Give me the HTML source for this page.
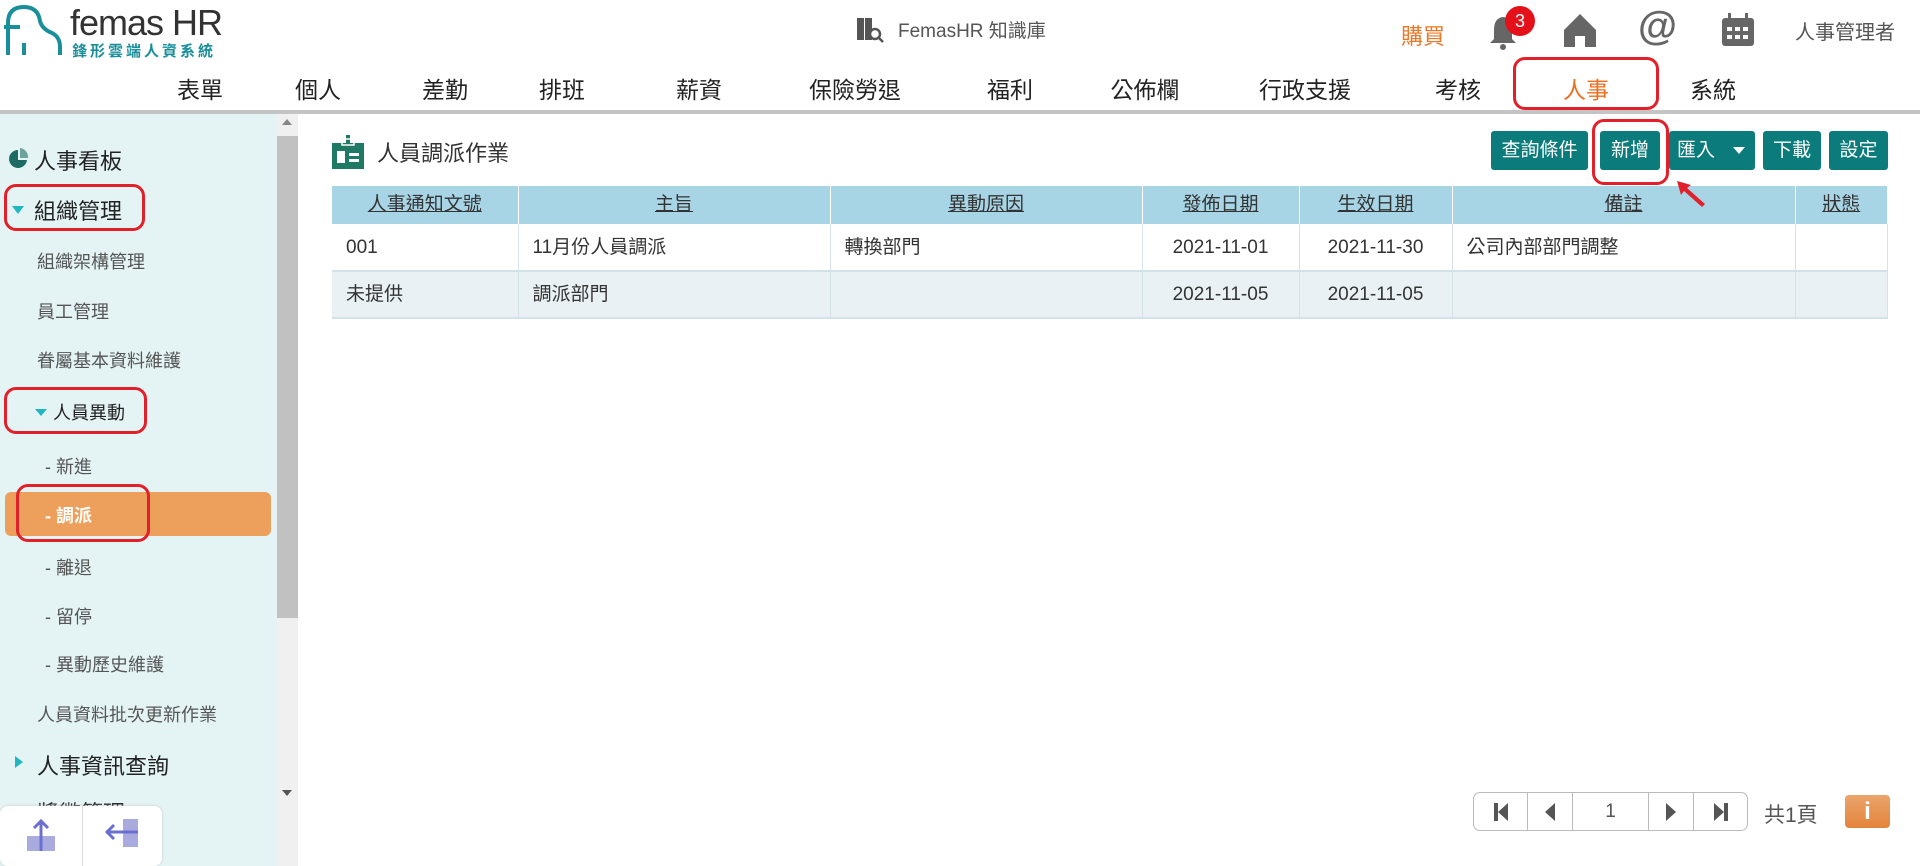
<!DOCTYPE html>
<html><head><meta charset="utf-8"><style>
*{margin:0;padding:0;box-sizing:border-box}
body{width:1920px;height:866px;overflow:hidden;background:#fff;font-family:"Liberation Sans","Noto Sans CJK TC",sans-serif;position:relative;color:#333}
.a{position:absolute;white-space:nowrap}
.nav{position:absolute;top:71px;font-size:23px;color:#222;transform:translateX(-50%)}
.side{position:absolute;left:0;top:114px;width:298px;height:752px;background:#e4f4f5}
.si{position:absolute;font-size:18px;color:#555;white-space:nowrap}
.rb{position:absolute;border:3px solid #e2202a;border-radius:12px;z-index:5}
.btn{position:absolute;top:131px;height:39px;background:#0b7c7b;color:#fff;font-size:19px;line-height:39px;text-align:center;border-radius:3px}
table{position:absolute;left:332px;top:186px;width:1556px;border-collapse:collapse;font-size:19px}
th{background:#a8d5e5;height:38px;line-height:38px;font-weight:normal;text-decoration:underline;color:#333;border-right:1px solid #fff;vertical-align:middle}
td{height:47px;line-height:45px;vertical-align:middle;border-right:1px solid #d5e3e8;border-bottom:2px solid #d3e2e8;padding:0 14px;color:#333}
tr.r2 td{background:#e9f1f4}
.pg{position:absolute;top:792px;height:39px;border:1px solid #bbb;border-radius:7px;left:1473px;width:275px;display:flex}
.pg div{border-right:1px solid #bbb;display:flex;align-items:center;justify-content:center}
.pg div:last-child{border-right:none}
</style></head><body>
<svg class="a" style="left:2px;top:3px" width="62" height="56" viewBox="0 0 62 56"><path d="M6 52 V20 Q6 4 22 4 Q36 4 38 18 Q40 26 50 30 Q58 34 58 44 V52" fill="none" stroke="#1a8f9c" stroke-width="4"/><path d="M2 24 H18" stroke="#1a8f9c" stroke-width="4"/><path d="M22 40 V52" stroke="#1a8f9c" stroke-width="4"/></svg>
<div class="a" style="left:70px;top:2px;font-size:36px;color:#333;letter-spacing:-1px">femas HR</div>
<div class="a" style="left:72px;top:40px;font-size:15px;color:#1a8f9c;font-weight:bold;letter-spacing:3px">鋒形雲端人資系統</div>
<svg class="a" style="left:855px;top:14px" width="30" height="30" viewBox="0 0 30 30"><rect x="2" y="4" width="7" height="22" fill="#555"/><rect x="10" y="4" width="7" height="22" fill="#555"/><circle cx="20" cy="20" r="5" fill="#fff" stroke="#555" stroke-width="2.5"/><path d="M24 24 L28 28" stroke="#555" stroke-width="2.5"/></svg>
<div class="a" style="left:898px;top:16px;font-size:19px;color:#555">FemasHR 知識庫</div>
<div class="a" style="left:1401px;top:19px;font-size:22px;color:#e8792a">購買</div>
<svg class="a" style="left:1488px;top:14px" width="30" height="36" viewBox="0 0 30 36"><path d="M15 3 Q6 4 6 16 V25 L2 29 H28 L24 25 V16 Q24 4 15 3Z" fill="#666"/><circle cx="15" cy="33" r="3" fill="#666"/></svg>
<div class="a" style="left:1505px;top:6px;width:30px;height:30px;border-radius:50%;background:#e4101a;color:#fff;font-size:18px;text-align:center;line-height:30px">3</div>
<svg class="a" style="left:1562px;top:12px" width="36" height="36" viewBox="0 0 36 36"><path d="M18 2 L34 18 V35 H23 V24 H13 V35 H2 V18Z" fill="#666"/></svg>
<div class="a" style="left:1638px;top:4px;font-size:40px;font-weight:bold;color:#666">@</div>
<svg class="a" style="left:1720px;top:12px" width="36" height="36" viewBox="0 0 36 36"><rect x="2" y="6" width="32" height="28" rx="3" fill="#666"/><rect x="8" y="1" width="3" height="8" fill="#666"/><rect x="25" y="1" width="3" height="8" fill="#666"/><g fill="#fff"><rect x="7" y="15" width="5" height="4"/><rect x="15" y="15" width="5" height="4"/><rect x="23" y="15" width="5" height="4"/><rect x="7" y="23" width="5" height="4"/><rect x="15" y="23" width="5" height="4"/><rect x="23" y="23" width="5" height="4"/></g></svg>
<div class="a" style="left:1795px;top:16px;font-size:20px;color:#555">人事管理者</div>
<div class="nav" style="left:200px">表單</div><div class="nav" style="left:318px">個人</div><div class="nav" style="left:445px">差勤</div><div class="nav" style="left:562px">排班</div><div class="nav" style="left:699px">薪資</div><div class="nav" style="left:855px">保險勞退</div><div class="nav" style="left:1010px">福利</div><div class="nav" style="left:1145px">公佈欄</div><div class="nav" style="left:1305px">行政支援</div><div class="nav" style="left:1458px">考核</div><div class="nav" style="left:1586px;color:#ef6e1d">人事</div><div class="nav" style="left:1713px">系統</div>
<div class="rb" style="left:1513px;top:57px;width:146px;height:53px"></div>
<div class="a" style="left:0;top:110px;width:1920px;height:4px;background:#c4c4c4"></div>
<div class="side"></div>
<div class="a" style="left:277px;top:114px;width:21px;height:752px;background:#f0f0f0"></div>
<div class="a" style="left:277px;top:136px;width:21px;height:482px;background:#c1c1c1"></div>
<div class="a" style="left:282px;top:119px;border:5px solid transparent;border-bottom:6px solid #888;border-top:none"></div>
<div class="a" style="left:282px;top:790px;border:5px solid transparent;border-top:6px solid #555;border-bottom:none"></div>
<svg class="a" style="left:9px;top:147px" width="20" height="22" viewBox="0 0 20 22"><path d="M9 3 A9 9 0 1 0 18 13 H9Z" fill="#1e6b63"/><path d="M11 1 V11 H19 A9 9 0 0 0 11 1Z" fill="#1e6b63" opacity=".6"/></svg>
<div class="si" style="left:34px;top:144px;font-size:22px;color:#222">人事看板</div>
<div class="a" style="left:12px;top:206px;border:6px solid transparent;border-top:8px solid #1fb8c1;border-bottom:none"></div>
<div class="si" style="left:34px;top:194px;font-size:22px;color:#222">組織管理</div>
<div class="rb" style="left:4px;top:184px;width:141px;height:47px"></div>
<div class="si" style="left:37px;top:248px">組織架構管理</div>
<div class="si" style="left:37px;top:298px">員工管理</div>
<div class="si" style="left:37px;top:347px">眷屬基本資料維護</div>
<div class="a" style="left:35px;top:409px;border:6px solid transparent;border-top:7px solid #1fb8c1;border-bottom:none"></div>
<div class="si" style="left:53px;top:399px;color:#222">人員異動</div>
<div class="rb" style="left:4px;top:387px;width:143px;height:47px"></div>
<div class="si" style="left:45px;top:453px">- 新進</div>
<div class="a" style="left:5px;top:492px;width:266px;height:44px;background:#eda05b;border-radius:6px"></div>
<div class="si" style="left:45px;top:502px;color:#fff;font-weight:bold">- 調派</div>
<div class="rb" style="left:16px;top:484px;width:134px;height:58px"></div>
<div class="si" style="left:45px;top:554px">- 離退</div>
<div class="si" style="left:45px;top:603px">- 留停</div>
<div class="si" style="left:45px;top:651px">- 異動歷史維護</div>
<div class="si" style="left:37px;top:701px">人員資料批次更新作業</div>
<div class="a" style="left:15px;top:756px;border:6px solid transparent;border-left:8px solid #1fb8c1;border-right:none"></div>
<div class="si" style="left:37px;top:749px;font-size:22px;color:#222">人事資訊查詢</div>
<div class="si" style="left:37px;top:796px;font-size:22px;color:#222">獎懲管理</div>
<div class="a" style="left:0;top:806px;width:162px;height:60px;background:#fff;border-radius:8px;box-shadow:0 0 3px #ccc"></div>
<div class="a" style="left:82px;top:806px;width:1px;height:60px;background:#ddd"></div>
<svg class="a" style="left:25px;top:818px" width="32" height="34" viewBox="0 0 32 34"><rect x="2" y="18" width="28" height="15" fill="#a9abdf"/><path d="M16 33 V3 M9 10 L16 3 L23 10" stroke="#6b6fcf" stroke-width="3" fill="none"/></svg>
<svg class="a" style="left:104px;top:817px" width="36" height="32" viewBox="0 0 36 32"><rect x="19" y="2" width="15" height="28" fill="#a9abdf"/><path d="M34 15 H3 M10 8 L3 15 L10 22" stroke="#6b6fcf" stroke-width="3" fill="none"/></svg>
<svg class="a" style="left:332px;top:135px" width="32" height="34" viewBox="0 0 32 34"><rect x="0" y="8" width="32" height="26" fill="#1e7a64"/><rect x="14" y="0" width="4" height="12" fill="#1e7a64"/><rect x="10" y="4" width="12" height="6" fill="none" stroke="#fff" stroke-width="1.5"/><rect x="5" y="16" width="8" height="12" fill="#fff"/><rect x="17" y="18" width="10" height="3" fill="#fff"/><rect x="17" y="24" width="10" height="3" fill="#fff"/></svg>
<div class="a" style="left:377px;top:136px;font-size:22px;color:#333">人員調派作業</div>
<div class="btn" style="left:1491px;width:97px">查詢條件</div>
<div class="btn" style="left:1600px;width:60px">新增</div>
<div class="btn" style="left:1669px;width:86px;text-align:left;padding-left:8px">匯入<span style="position:absolute;left:64px;top:16px;border:6px solid transparent;border-top:7px solid #fff;border-bottom:none"></span></div>
<div class="btn" style="left:1763px;width:58px">下載</div>
<div class="btn" style="left:1829px;width:59px">設定</div>
<div class="rb" style="left:1592px;top:119px;width:77px;height:66px"></div>
<table>
<tr><th style="width:186px">人事通知文號</th><th style="width:312px">主旨</th><th style="width:312px">異動原因</th><th style="width:157px">發佈日期</th><th style="width:153px">生效日期</th><th style="width:343px">備註</th><th>狀態</th></tr>
<tr><td>001</td><td>11月份人員調派</td><td>轉換部門</td><td style="text-align:center">2021-11-01</td><td style="text-align:center">2021-11-30</td><td>公司內部部門調整</td><td></td></tr>
<tr class="r2"><td>未提供</td><td>調派部門</td><td></td><td style="text-align:center">2021-11-05</td><td style="text-align:center">2021-11-05</td><td></td><td></td></tr>
</table>
<svg class="a" style="left:1673px;top:178px;z-index:6" width="34" height="30" viewBox="0 0 34 30"><path d="M4 3 L18 7 L14 10 L32 26 L29 29 L11 13 L8 17Z" fill="#e2202a"/></svg>
<div class="pg">
<div style="width:54px"><svg width="16" height="18"><rect x="1" y="0" width="4" height="18" fill="#555"/><path d="M15 0 V18 L5 9Z" fill="#555"/></svg></div>
<div style="width:45px"><svg width="12" height="18"><path d="M11 0 V18 L1 9Z" fill="#555"/></svg></div>
<div style="width:76px;font-size:19px;color:#555">1</div>
<div style="width:45px"><svg width="12" height="18"><path d="M1 0 V18 L11 9Z" fill="#555"/></svg></div>
<div style="flex:1"><svg width="16" height="18"><path d="M1 0 V18 L11 9Z" fill="#555"/><rect x="11" y="0" width="4" height="18" fill="#555"/></svg></div>
</div>
<div class="a" style="left:1764px;top:799px;font-size:21px;color:#555">共1頁</div>
<div class="a" style="left:1845px;top:795px;width:45px;height:33px;border-radius:4px;background:linear-gradient(#eaa56b,#e3833c);color:#fff;font-size:24px;font-weight:bold;text-align:center;line-height:33px">i</div>
</body></html>
